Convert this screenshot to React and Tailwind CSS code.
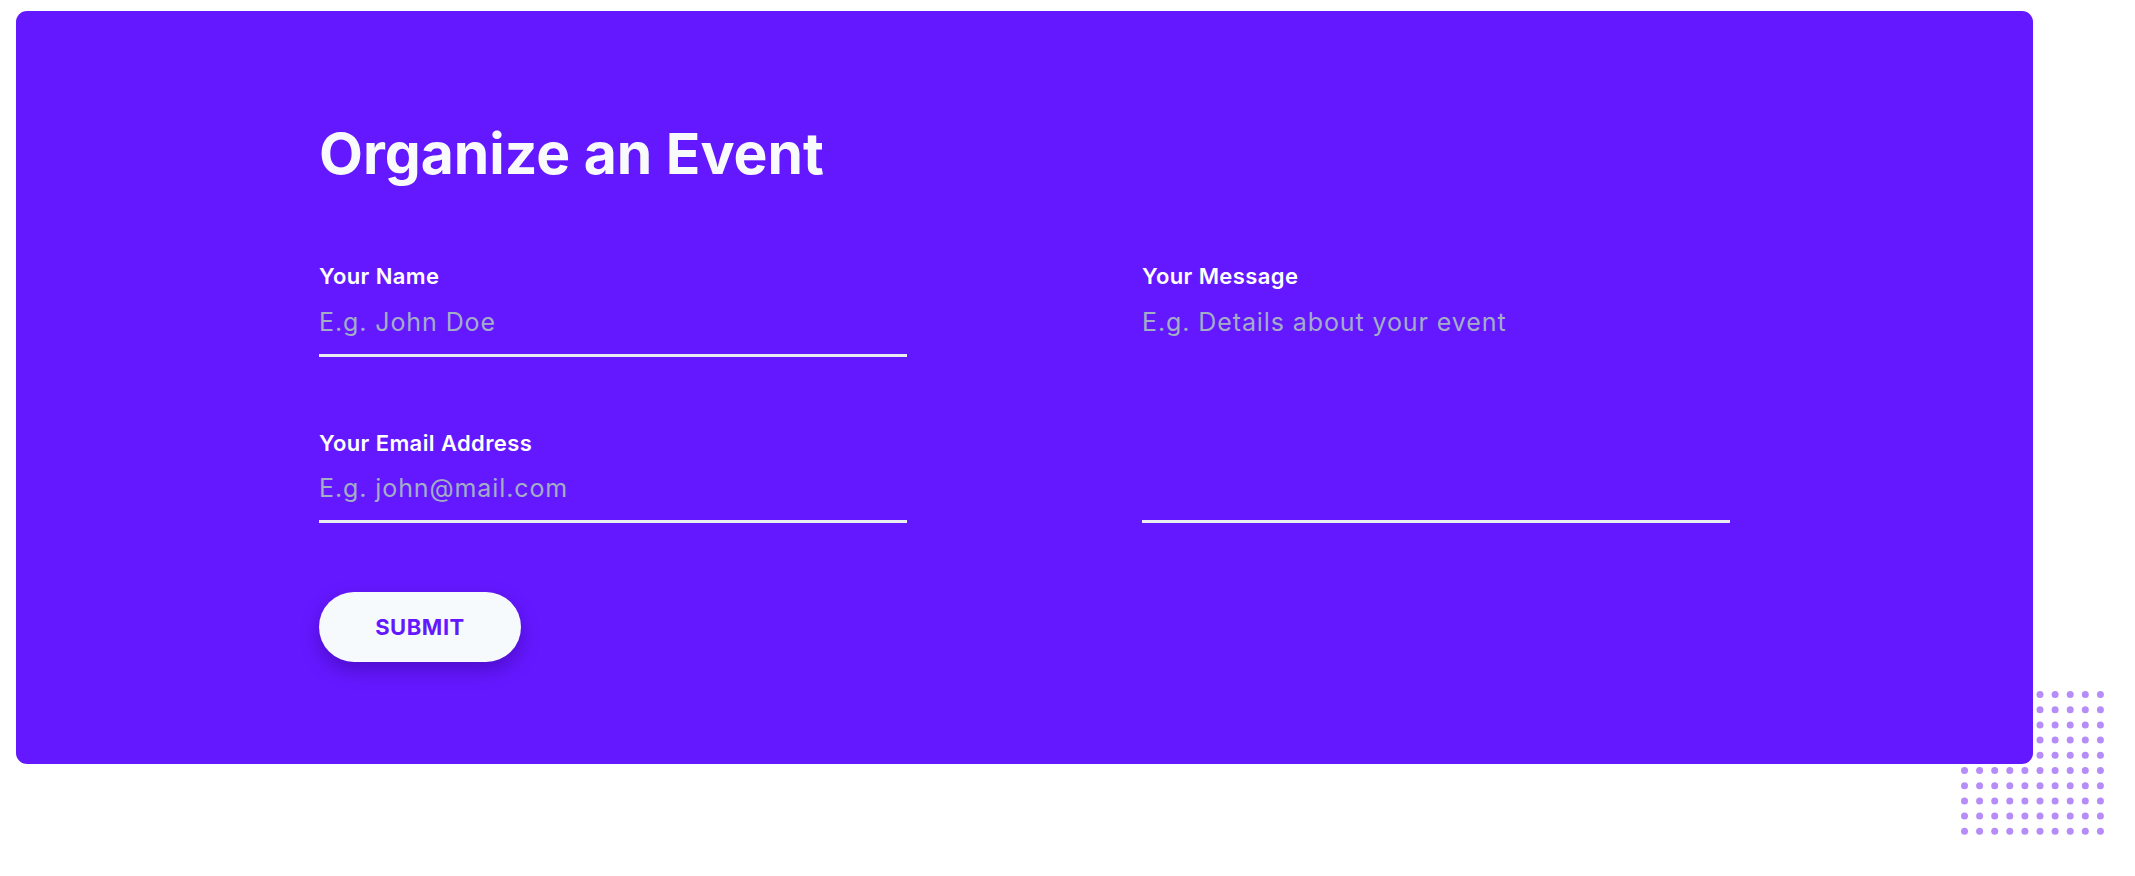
import React, { useState } from "react";

function Dots() {
  const cells = [];
  for (let r = 0; r < 10; r++) {
    for (let c = 0; c < 10; c++) {
      cells.push(<circle key={`${r}-${c}`} cx={3.5 + c * 15.1} cy={3.5 + r * 15.2} r="3.5" fill="#b68cf8" />);
    }
  }
  return (
    <svg width="144" height="145" viewBox="0 0 144 145" className="absolute left-[1961px] top-[691px]">
      {cells}
    </svg>
  );
}

export default function App() {
  const [name, setName] = useState("");
  const [email, setEmail] = useState("");
  const [message, setMessage] = useState("");

  return (
    <div className="relative min-h-screen bg-white pt-[11px] pl-4 pr-[102px] font-['Inter',sans-serif]">
      {/* dotted decoration sits behind the card */}
      <Dots />

      <section className="relative z-10 w-[2017px] rounded-[11px] bg-[#6418ff] pt-[108px] pb-[102px]">
        <div className="mx-auto w-[1411px]">
          <h2 className="text-[57px] leading-[70px] font-bold text-[#f8fafc]">Organize an Event</h2>

          <form onSubmit={(e) => e.preventDefault()} className="mt-[74px]">
            <div className="grid grid-cols-2 gap-x-[235px]">
              <div>
                <label className="block text-[22px] leading-[26px] font-semibold tracking-[0.4px] text-white">Your Name</label>
                <input
                  value={name}
                  onChange={(e) => setName(e.target.value)}
                  placeholder="E.g. John Doe"
                  className="mt-[18px] block w-full bg-transparent pb-[17px] text-[25px] leading-[30px] tracking-[0.9px] text-white placeholder:text-[#a3aec4] border-b-[3px] border-[#e8ecf0] outline-none"
                />

                <label className="mt-[73px] block text-[22px] leading-[26px] font-semibold tracking-[0.4px] text-white">Your Email Address</label>
                <input
                  value={email}
                  onChange={(e) => setEmail(e.target.value)}
                  placeholder="E.g. john@mail.com"
                  className="mt-[17px] block w-full bg-transparent pb-[17px] text-[25px] leading-[30px] tracking-[0.9px] text-white placeholder:text-[#a3aec4] border-b-[3px] border-[#e8ecf0] outline-none"
                />
              </div>

              <div className="flex flex-col">
                <label className="block text-[22px] leading-[26px] font-semibold tracking-[0.4px] text-white">Your Message</label>
                <textarea
                  value={message}
                  onChange={(e) => setMessage(e.target.value)}
                  placeholder="E.g. Details about your event"
                  className="mt-[18px] block h-[216px] w-full resize-none bg-transparent text-[25px] leading-[30px] tracking-[0.9px] text-white placeholder:text-[#a3aec4] border-b-[3px] border-[#e8ecf0] outline-none"
                />
              </div>
            </div>

            <button
              type="submit"
              className="mt-[69px] h-[70px] w-[202px] rounded-full bg-[#f7fafc] text-[22px] font-bold tracking-wide text-[#6418ff] shadow-[0_8px_18px_rgba(50,0,140,0.45)]"
            >
              SUBMIT
            </button>
          </form>
        </div>
      </section>
    </div>
  );
}
